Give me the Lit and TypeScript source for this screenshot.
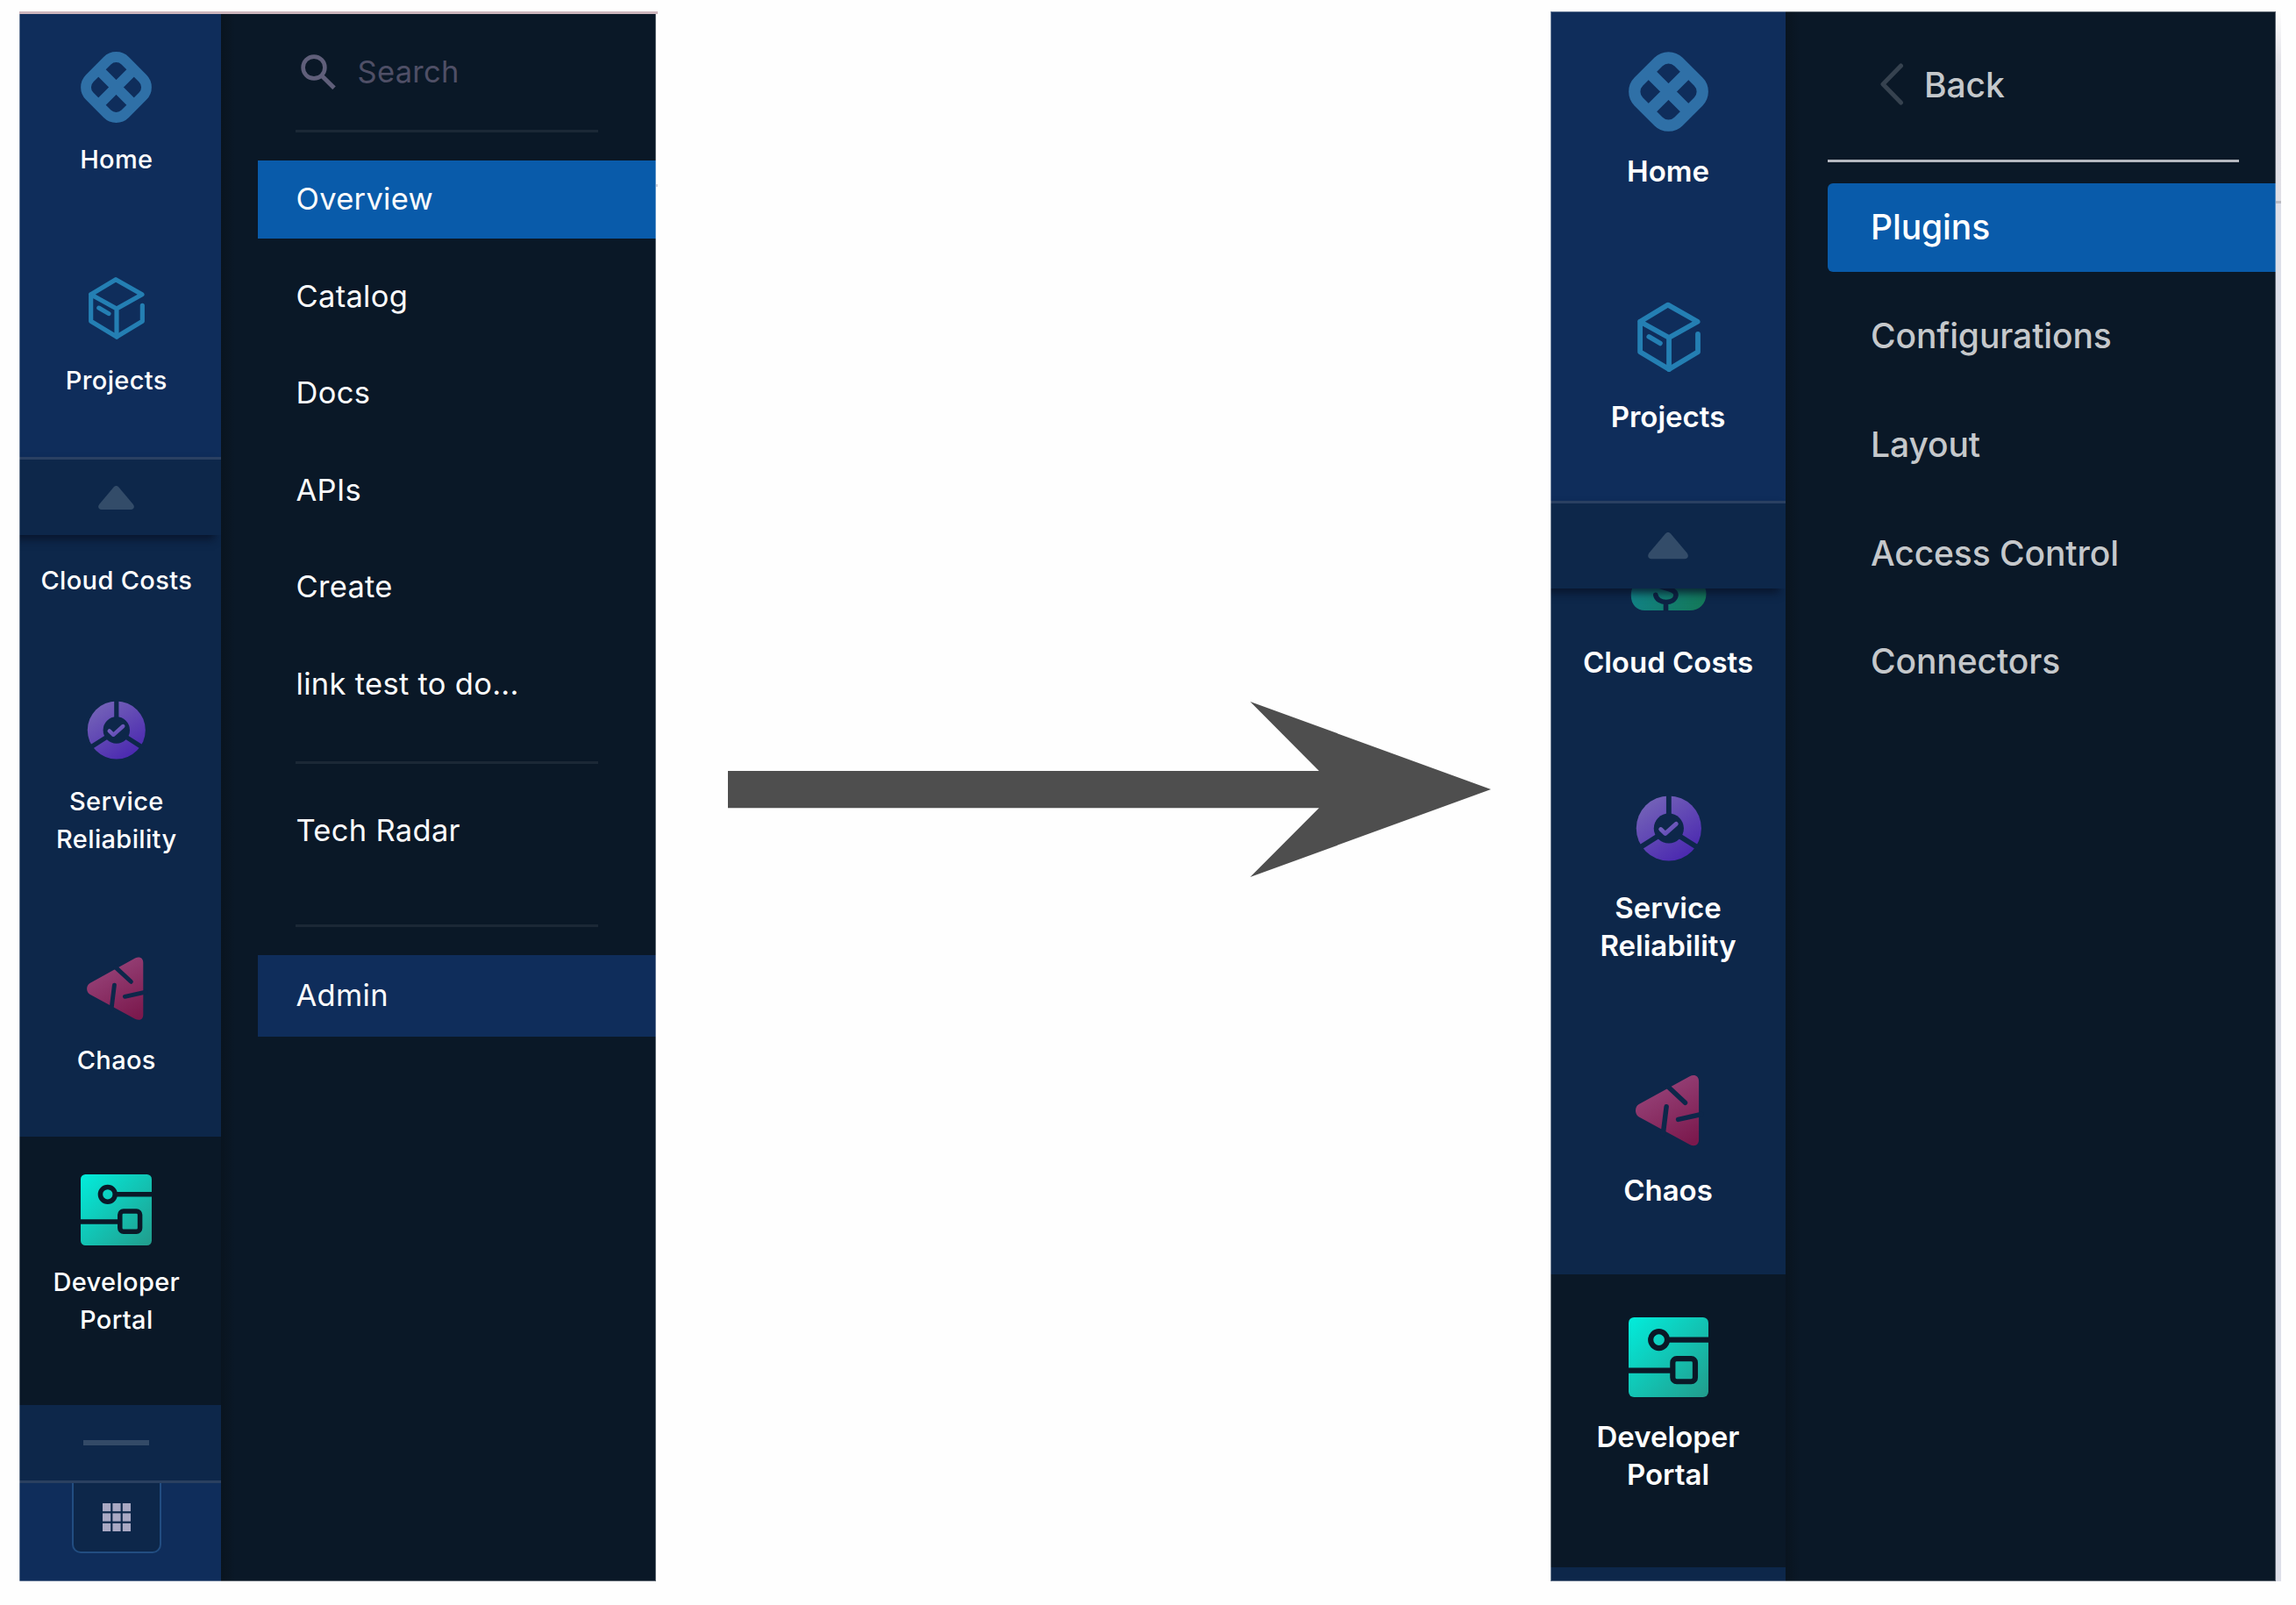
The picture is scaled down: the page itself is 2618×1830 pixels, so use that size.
import { LitElement, html, svg, css, type TemplateResult } from "lit";
import { customElement, property } from "lit/decorators.js";
import { classMap } from "lit/directives/class-map.js";

const homeIcon = html`<svg class="icon" viewBox="0 0 81 81">
  <g transform="rotate(45 40.5 40.5)" fill="none" stroke="#2f70a7" stroke-width="11.8">
    <rect x="11.9" y="11.9" width="57.2" height="57.2" rx="14.4" />
    <path d="M40.5 14V67M14 40.5H67" />
  </g>
</svg>`;

const projectsIcon = html`<svg class="icon" viewBox="0 0 243 243">
  <g transform="translate(27 14)" fill="none" stroke="#247fb3" stroke-width="15.5" stroke-linecap="round" stroke-linejoin="round">
    <path d="M96 109L183 60L93 9L8 60L96 109V205L8 152V60" />
    <path d="M96 205L184 152V98" />
    <path d="M35 106L69 126" stroke-width="15" />
  </g>
</svg>`;

const cloudIcon = html`<svg class="icon" viewBox="0 0 91 91">
  <defs>
    <linearGradient id="cloud" gradientUnits="userSpaceOnUse" x1="3" y1="50" x2="88" y2="72">
      <stop offset="0" stop-color="#118286" />
      <stop offset="1" stop-color="#147858" />
    </linearGradient>
  </defs>
  <path fill="url(#cloud)" d="M2.8 60C2.8 48 10 42 17 40C18 24 30 14 45 14C61 14 72 24 74 40C82 42 88.5 49 88.5 58C88.5 70 80 77 70 77H18.5C9 77 2.8 70 2.8 60Z" />
  <g fill="none" stroke="#0d2344" stroke-width="5.6" stroke-linecap="round">
    <path d="M53 44C51 38 33 37 32.5 45C32 53 54.2 50 54 59.5C53 70.3 32.5 70 30.8 59.3" />
    <path d="M42.5 69V78" stroke-linecap="butt" />
  </g>
</svg>`;

const serviceIcon = html`<svg class="icon" viewBox="0 0 81 81">
  <defs>
    <linearGradient id="service" x1="0.15" y1="0.05" x2="0.75" y2="0.95">
      <stop offset="0" stop-color="#7564b8" />
      <stop offset="1" stop-color="#4b29b0" />
    </linearGradient>
    <linearGradient id="tick" x1="0" y1="0" x2="1" y2="1">
      <stop offset="0" stop-color="#7767c0" />
      <stop offset="1" stop-color="#5f45b5" />
    </linearGradient>
  </defs>
  <circle cx="40.8" cy="40.5" r="33" fill="url(#service)" />
  <circle cx="40.8" cy="40.5" r="15.2" fill="#0d274a" />
  <path d="M40.8 27V6M28.9 48.9L10.3 60.8M52.7 48.9L71.3 60.8" stroke="#0d274a" stroke-width="5.2" />
  <path d="M32.7 41.4L37.3 45.8L48.3 36" fill="none" stroke="url(#tick)" stroke-width="4.4" stroke-linecap="round" stroke-linejoin="round" />
</svg>`;

const chaosIcon = html`<svg class="icon" viewBox="0 0 81 81">
  <defs>
    <linearGradient id="chaos" x1="0.3" y1="0" x2="0.8" y2="1">
      <stop offset="0" stop-color="#99467c" />
      <stop offset="1" stop-color="#7b194d" />
    </linearGradient>
  </defs>
  <path fill="url(#chaos)" d="M62 5.6C66.5 3.3 71.3 4.7 71.3 10.9V69.7C71.3 75.9 66.5 77.1 62 74.7L10.5 46.7C6 44.1 6 36.3 10.5 33.9Z" />
  <g fill="none" stroke="#0d274a" stroke-width="4.9" stroke-linecap="round">
    <path d="M40 16.1L57.4 32.3" />
    <path d="M74 44.1L50.4 49.3" />
    <path d="M35 63.7L38.4 36.3" />
  </g>
</svg>`;

const portalIcon = html`<svg class="icon" viewBox="0 0 81 81">
  <defs>
    <linearGradient id="portal" x1="0" y1="0" x2="1" y2="1">
      <stop offset="0" stop-color="#02eddc" />
      <stop offset="1" stop-color="#229b8b" />
    </linearGradient>
  </defs>
  <rect width="81" height="81" rx="5.5" fill="url(#portal)" />
  <g fill="none" stroke="#0a1827" stroke-width="5.5">
    <circle cx="30.8" cy="22.8" r="8.4" />
    <path d="M39 22.8H81M0 54H44" />
    <rect x="44.8" y="42" width="22.8" height="23.2" rx="4" />
  </g>
</svg>`;

const searchIcon = html`<svg class="search-icon" viewBox="0 0 42 42">
  <g fill="none" stroke="#605f7a" stroke-width="4.6">
    <circle cx="17" cy="17" r="12.4" />
    <path d="M26 26.5L40 40.3" stroke-width="5" />
  </g>
</svg>`;

const chevronIcon = html`<svg class="chevron" viewBox="0 0 28 50">
  <path d="M24.5 4L4 25L24.5 46" fill="none" stroke="#36424f" stroke-width="5" stroke-linecap="round" stroke-linejoin="round" />
</svg>`;

const upIcon = html`<svg class="up" viewBox="0 0 41 27">
  <path fill="#334c69" d="M17.6 1.5C19.3 -0.5 21.7 -0.5 23.4 1.5L39.8 21C42 24 40.6 27 37.2 27H3.8C0.4 27 -1 24 1.2 21Z" />
</svg>`;

const gridIcon = html`<svg class="grid-icon" viewBox="0 0 32 32">
  ${[0, 11.4, 22.8].map(y => [0, 11.4, 22.8].map(x => svg`<rect x=${x} y=${y} width="9.2" height="9.2" fill="#a9a9c4" />`))}
</svg>`;

interface Module {
  lines: string[];
  icon: TemplateResult;
  active?: boolean;
}

const pinned: Module[] = [
  { lines: ["Home"], icon: homeIcon },
  { lines: ["Projects"], icon: projectsIcon },
];

const modules: Module[] = [
  { lines: ["Cloud Costs"], icon: cloudIcon },
  { lines: ["Service", "Reliability"], icon: serviceIcon },
  { lines: ["Chaos"], icon: chaosIcon },
  { lines: ["Developer", "Portal"], icon: portalIcon, active: true },
];

@customElement("module-rail")
export class ModuleRail extends LitElement {
  @property({ type: Boolean }) launcher = false;

  static styles = css`
    :host {
      display: flex;
      flex-direction: column;
      flex: none;
      box-sizing: border-box;
      width: var(--rail-width);
      overflow: hidden;
      background: #0f2d5b;
      color: #fff;
      font-size: var(--label-size);
      font-weight: var(--label-weight);
      letter-spacing: var(--label-spacing);
      line-height: var(--label-line);
      text-align: center;
    }
    .pinned {
      height: var(--pinned-height);
      padding-top: var(--pinned-pad);
      box-sizing: border-box;
      flex: none;
    }
    .item {
      display: flex;
      flex-direction: column;
      align-items: center;
      box-sizing: border-box;
      height: var(--item-height);
      padding-top: var(--item-pad);
      padding-right: var(--rail-nudge);
    }
    .item.tall {
      height: var(--item-tall);
    }
    .item.active {
      height: 400px;
      background: #0a1827;
      line-height: var(--label-line-active);
    }
    .pinned .item {
      padding-top: 0;
    }
    .icon {
      display: block;
      flex: none;
      width: var(--icon);
      height: var(--icon);
      margin-bottom: var(--icon-gap);
    }
    .scroll-up {
      display: flex;
      align-items: center;
      justify-content: center;
      flex: none;
      box-sizing: border-box;
      height: var(--up-height);
      border-top: 3px solid #2a4062;
      padding-right: var(--rail-nudge);
      background: #0d274a;
      position: relative;
      box-shadow: -6px 6px 9px -1px rgba(8, 18, 38, 0.8);
    }
    .up {
      display: block;
      width: var(--up-width);
    }
    .scroller {
      height: var(--scroll-height);
      flex: none;
      overflow: hidden;
      background: #0d274a;
    }
    .modules {
      margin-top: var(--scroll-offset);
    }
    .footer {
      display: flex;
      flex-direction: column;
      flex: 1;
      background: #0d274a;
    }
    .handle {
      height: 86px;
      display: flex;
      align-items: center;
      justify-content: center;
      padding: 0 9px 0 0;
      flex: none;
    }
    .grip {
      width: 75.5px;
      height: 6px;
      background: #334a67;
    }
    .launcher {
      flex: 1;
      display: flex;
      justify-content: center;
      align-items: flex-start;
      padding-right: 8px;
      border-top: 3px solid #2a4060;
      background: #0f2d5b;
    }
    .apps {
      display: flex;
      align-items: center;
      justify-content: center;
      box-sizing: border-box;
      width: 102px;
      height: 79.5px;
      border: 2.5px solid #224d81;
      border-top: 0;
      border-radius: 0 0 10px 10px;
      background: #0d274a;
    }
    .grid-icon {
      width: 32px;
      height: 32px;
      margin-top: 1px;
    }
  `;

  private item(m: Module) {
    return html`<div class=${classMap({ item: true, tall: m.lines.length > 1, active: !!m.active })}>
      ${m.icon}${m.lines.map(l => html`<div>${l}</div>`)}
    </div>`;
  }

  render() {
    return html`
      <div class="pinned">${pinned.map(m => this.item(m))}</div>
      <div class="scroll-up">${upIcon}</div>
      <div class="scroller"><div class="modules">${modules.map(m => this.item(m))}</div></div>
      <div class="footer">
        ${this.launcher
          ? html`<div class="handle"><div class="grip"></div></div>
              <div class="launcher"><div class="apps">${gridIcon}</div></div>`
          : ""}
      </div>
    `;
  }
}

@customElement("app-root")
export class AppRoot extends LitElement {
  static styles = css`
    :host {
      display: block;
      width: 2618px;
      height: 1830px;
      overflow: hidden;
      background: #fefefe;
      font-family: Inter, "Liberation Sans", sans-serif;
    }
    .stage {
      display: flex;
      align-items: flex-start;
      padding: 13px 17px 0 22px;
    }
    .before {
      width: 728px;
      flex: none;
      border-top: 3px solid #cdb6bd;
      display: flex;
    }
    .panel {
      display: flex;
      position: relative;
      flex: none;
      background: #0a1827;
    }
    .panel::after {
      content: "";
      position: absolute;
      inset: 0;
      box-shadow: inset 1px 0 rgba(255, 255, 255, 0.35), inset -1px -1px rgba(255, 255, 255, 0.35);
    }
    .before .panel {
      width: 725.5px;
      height: 1787px;
    }
    .after {
      display: flex;
      margin-left: 68px;
    }
    .after .panel {
      width: 827px;
      height: 1790px;
    }
    .after .panel::after {
      box-shadow: inset 0 0 0 1px rgba(255, 255, 255, 0.35);
    }
    .tick {
      width: 3px;
      height: 3px;
      margin-top: 194px;
      background: #d5d5dd;
    }
    .sliver {
      width: 6px;
      height: 1790px;
      background: linear-gradient(#fdfdfd, #e3e2e8 60px, #e0dfe6 216px, #bbbbc2 216px, #bbbbc2 219px, #dddfe9 219px);
    }
    .before module-rail {
      --rail-width: 229.6px;
      --rail-nudge: 8px;
      --label-size: 29px;
      --label-weight: 500;
      --label-spacing: 0.35px;
      --label-line: 42.3px;
      --label-line-active: 43px;
      --pinned-height: 505px;
      --pinned-pad: 43px;
      --item-height: 252.2px;
      --item-tall: 294.7px;
      --item-pad: 43.2px;
      --icon: 81px;
      --icon-gap: 20.5px;
      --up-height: 89px;
      --up-width: 41px;
      --scroll-height: 992px;
      --scroll-offset: -113.4px;
    }
    .after module-rail {
      --rail-width: 268px;
      --rail-nudge: 0px;
      --label-size: 33px;
      --label-weight: 600;
      --label-spacing: 0px;
      --label-line: 43px;
      --label-line-active: 43px;
      --pinned-height: 558px;
      --pinned-pad: 46px;
      --item-height: 280.2px;
      --item-tall: 322.6px;
      --item-pad: 48.8px;
      --icon: 91px;
      --icon-gap: 24px;
      --up-height: 100px;
      --up-width: 46px;
      --scroll-height: 1116px;
      --scroll-offset: -101.2px;
    }
    .menu {
      flex: 1;
      display: flex;
      flex-direction: column;
      background: linear-gradient(90deg, #09141f, #0a1827 16px);
      white-space: nowrap;
    }
    .row {
      display: flex;
      align-items: center;
      flex: none;
      box-sizing: border-box;
    }
    .before .menu {
      padding-left: 42.9px;
      font-size: 34.5px;
      letter-spacing: 0.3px;
      color: #fbfbfc;
    }
    .before .row {
      height: 89px;
      padding: 0 0 2px 43px;
      margin-bottom: 21.5px;
    }
    .before .row.search {
      height: 132px;
      margin: 0;
      padding: 0 0 2px 47px;
      color: #4f4f66;
      gap: 24px;
    }
    .search-icon {
      width: 42px;
      height: 42px;
    }
    .rule {
      flex: none;
      width: 345px;
      height: 3px;
      margin-left: 43px;
      background: #1b2836;
    }
    .rule.top {
      margin-bottom: 32px;
    }
    .rule.middle {
      margin-top: 21.5px;
      margin-bottom: 32px;
    }
    .rule.bottom {
      margin-top: 41px;
      margin-bottom: 32px;
    }
    .before .row.selected,
    .after .row.selected {
      background: #095baa;
    }
    .before .row.admin {
      height: 93px;
      background: #0f2d5b;
    }
    .arrow {
      flex: none;
      width: 870px;
      height: 200px;
      margin: 787px 0 0 80px;
    }
    .after .menu {
      padding-left: 48px;
      font-size: 39px;
      font-weight: 500;
      letter-spacing: -0.1px;
      color: #c5c8cb;
    }
    .after .row {
      height: 100.5px;
      padding-left: 49px;
      margin-bottom: 23.1px;
    }
    .after .row.selected {
      padding-bottom: 1px;
      border-radius: 6px 0 0 6px;
      color: #fff;
    }
    .after .row.back {
      height: 168.5px;
      margin: 0;
      padding: 0 0 2px 59px;
      gap: 23px;
    }
    .chevron {
      width: 28px;
      height: 50px;
    }
    .after .rule {
      width: 468.5px;
      margin: 0 0 24.5px 0;
      background: #b5b8c0;
    }
  `;

  private rows(items: string[], selected = "") {
    return items.map(i => html`<div class=${classMap({ row: true, selected: i === selected })}>${i}</div>`);
  }

  render() {
    return html`
      <div class="stage">
        <div class="before">
          <div class="panel">
            <module-rail launcher></module-rail>
            <div class="menu">
              <div class="row search">${searchIcon}<span>Search</span></div>
              <div class="rule top"></div>
              ${this.rows(["Overview", "Catalog", "Docs", "APIs", "Create", "link test to do..."], "Overview")}
              <div class="rule middle"></div>
              ${this.rows(["Tech Radar"])}
              <div class="rule bottom"></div>
              <div class="row admin">Admin</div>
            </div>
          </div>
          <div class="tick"></div>
        </div>
        <svg class="arrow" viewBox="0 0 870 200">
          <path fill="#4e4e4e" d="M0 79H674L595.5 0L870 100L595.5 200L674 121.3H0Z" />
        </svg>
        <div class="after">
          <div class="panel">
            <module-rail></module-rail>
            <div class="menu">
              <div class="row back">${chevronIcon}<span>Back</span></div>
              <div class="rule"></div>
              ${this.rows(["Plugins", "Configurations", "Layout", "Access Control", "Connectors"], "Plugins")}
            </div>
          </div>
          <div class="sliver"></div>
        </div>
      </div>
    `;
  }
}
